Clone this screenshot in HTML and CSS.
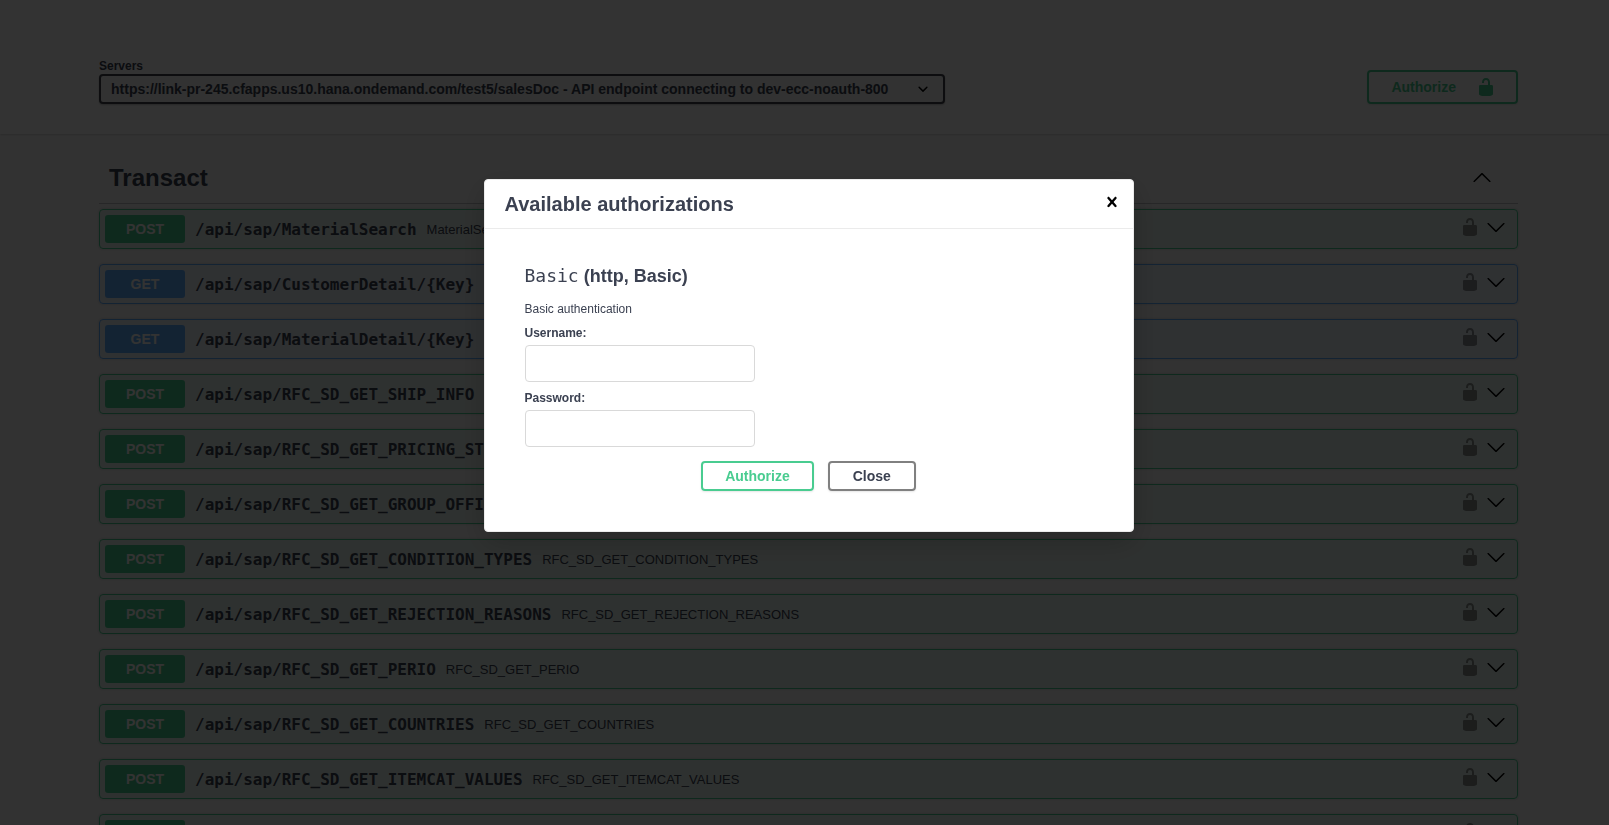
FILE: index.html
```
<!DOCTYPE html>
<html lang="en">
<head>
<meta charset="utf-8">
<title>API documentation</title>
<link rel="stylesheet" href="styles.css">
</head>
<body>
<svg class="sprite" aria-hidden="true">
  <symbol id="unlocked" viewBox="0 0 20 20"><path d="M15.8 8H14V5.6C14 2.703 12.665 1 10 1 7.334 1 6 2.703 6 5.6V6h2v-.801C8 3.754 8.797 3 10 3c1.203 0 2 .754 2 2.199V8H4c-.553 0-1 .646-1 1.199V17c0 .549.428 1.139.951 1.307l1.197.387C5.672 18.861 6.55 19 7.1 19h5.8c.549 0 1.428-.139 1.951-.307l1.196-.387c.524-.167.953-.757.953-1.306V9.199C17 8.646 16.352 8 15.8 8z"/></symbol>
  <symbol id="down" viewBox="0 0 20 20"><path d="M17.418 6.109c.272-.268.709-.268.979 0s.271.701 0 .969l-7.908 7.83c-.27.268-.707.268-.979 0l-7.908-7.83c-.27-.268-.27-.701 0-.969.271-.268.709-.268.979 0L10 13.25l7.418-7.141z"/></symbol>
  <symbol id="up" viewBox="0 0 20 20"><path d="M17.418 14.908c.272.268.709.268.979 0s.271-.701 0-.969l-7.908-7.83c-.27-.268-.707-.268-.979 0l-7.908 7.83c-.27.268-.27.701 0 .969.271.268.709.268.979 0L10 7.767l7.418 7.141z"/></symbol>
  <symbol id="close" viewBox="0 0 20 20"><path d="M14.348 14.849c-.469.469-1.229.469-1.697 0L10 11.819l-2.651 3.029c-.469.469-1.229.469-1.697 0-.469-.469-.469-1.229 0-1.697l2.758-3.15-2.759-3.152c-.469-.469-.469-1.228 0-1.697.469-.469 1.228-.469 1.697 0L10 8.183l2.651-3.031c.469-.469 1.228-.469 1.697 0 .469.469.469 1.229 0 1.697l-2.758 3.152 2.758 3.15c.469.469.469 1.229 0 1.698z"/></symbol>
</svg>

<header class="scheme">
  <div class="wrapper scheme-row">
    <div class="servers">
      <label class="servers-label" for="server">Servers</label>
      <select class="server-select" id="server">
        <option>https://link-pr-245.cfapps.us10.hana.ondemand.com/test5/salesDoc - API endpoint connecting to dev-ecc-noauth-800</option>
      </select>
    </div>
    <button class="btn btn-authorize btn-top" type="button">Authorize <svg class="icon"><use href="#unlocked"/></svg></button>
  </div>
</header>

<main class="wrapper">
  <div class="tag">
    <h2 class="tag-title">Transact</h2>
    <button class="icon-btn" type="button" aria-label="Collapse section"><svg class="icon"><use href="#up"/></svg></button>
  </div>
  <div class="operations">
    <div class="op post"><span class="method">POST</span><span class="path">/api/sap/MaterialSearch</span><span class="summary">MaterialSearch</span><button class="icon-btn lock" type="button" aria-label="Unlocked"><svg class="icon"><use href="#unlocked"/></svg></button><button class="icon-btn" type="button" aria-label="Expand"><svg class="icon"><use href="#down"/></svg></button></div>
    <div class="op get"><span class="method">GET</span><span class="path">/api/sap/CustomerDetail/{Key}</span><button class="icon-btn lock" type="button" aria-label="Unlocked"><svg class="icon"><use href="#unlocked"/></svg></button><button class="icon-btn" type="button" aria-label="Expand"><svg class="icon"><use href="#down"/></svg></button></div>
    <div class="op get"><span class="method">GET</span><span class="path">/api/sap/MaterialDetail/{Key}</span><button class="icon-btn lock" type="button" aria-label="Unlocked"><svg class="icon"><use href="#unlocked"/></svg></button><button class="icon-btn" type="button" aria-label="Expand"><svg class="icon"><use href="#down"/></svg></button></div>
    <div class="op post"><span class="method">POST</span><span class="path">/api/sap/RFC_SD_GET_SHIP_INFO</span><button class="icon-btn lock" type="button" aria-label="Unlocked"><svg class="icon"><use href="#unlocked"/></svg></button><button class="icon-btn" type="button" aria-label="Expand"><svg class="icon"><use href="#down"/></svg></button></div>
    <div class="op post"><span class="method">POST</span><span class="path">/api/sap/RFC_SD_GET_PRICING_ST</span><button class="icon-btn lock" type="button" aria-label="Unlocked"><svg class="icon"><use href="#unlocked"/></svg></button><button class="icon-btn" type="button" aria-label="Expand"><svg class="icon"><use href="#down"/></svg></button></div>
    <div class="op post"><span class="method">POST</span><span class="path">/api/sap/RFC_SD_GET_GROUP_OFFI</span><button class="icon-btn lock" type="button" aria-label="Unlocked"><svg class="icon"><use href="#unlocked"/></svg></button><button class="icon-btn" type="button" aria-label="Expand"><svg class="icon"><use href="#down"/></svg></button></div>
    <div class="op post"><span class="method">POST</span><span class="path">/api/sap/RFC_SD_GET_CONDITION_TYPES</span><span class="summary">RFC_SD_GET_CONDITION_TYPES</span><button class="icon-btn lock" type="button" aria-label="Unlocked"><svg class="icon"><use href="#unlocked"/></svg></button><button class="icon-btn" type="button" aria-label="Expand"><svg class="icon"><use href="#down"/></svg></button></div>
    <div class="op post"><span class="method">POST</span><span class="path">/api/sap/RFC_SD_GET_REJECTION_REASONS</span><span class="summary">RFC_SD_GET_REJECTION_REASONS</span><button class="icon-btn lock" type="button" aria-label="Unlocked"><svg class="icon"><use href="#unlocked"/></svg></button><button class="icon-btn" type="button" aria-label="Expand"><svg class="icon"><use href="#down"/></svg></button></div>
    <div class="op post"><span class="method">POST</span><span class="path">/api/sap/RFC_SD_GET_PERIO</span><span class="summary">RFC_SD_GET_PERIO</span><button class="icon-btn lock" type="button" aria-label="Unlocked"><svg class="icon"><use href="#unlocked"/></svg></button><button class="icon-btn" type="button" aria-label="Expand"><svg class="icon"><use href="#down"/></svg></button></div>
    <div class="op post"><span class="method">POST</span><span class="path">/api/sap/RFC_SD_GET_COUNTRIES</span><span class="summary">RFC_SD_GET_COUNTRIES</span><button class="icon-btn lock" type="button" aria-label="Unlocked"><svg class="icon"><use href="#unlocked"/></svg></button><button class="icon-btn" type="button" aria-label="Expand"><svg class="icon"><use href="#down"/></svg></button></div>
    <div class="op post"><span class="method">POST</span><span class="path">/api/sap/RFC_SD_GET_ITEMCAT_VALUES</span><span class="summary">RFC_SD_GET_ITEMCAT_VALUES</span><button class="icon-btn lock" type="button" aria-label="Unlocked"><svg class="icon"><use href="#unlocked"/></svg></button><button class="icon-btn" type="button" aria-label="Expand"><svg class="icon"><use href="#down"/></svg></button></div>
    <div class="op post"><span class="method"></span><button class="icon-btn lock" type="button" aria-label="Unlocked"><svg class="icon"><use href="#unlocked"/></svg></button><button class="icon-btn" type="button" aria-label="Expand"><svg class="icon"><use href="#down"/></svg></button></div>
  </div>
</main>

<div class="backdrop">
  <section class="modal" role="dialog" aria-modal="true" aria-labelledby="modal-title">
    <div class="modal-header">
      <h3 class="modal-title" id="modal-title">Available authorizations</h3>
      <button class="icon-btn" type="button" aria-label="Close dialog"><svg class="icon"><use href="#close"/></svg></button>
    </div>
    <form class="modal-body">
      <h4 class="auth-title"><code class="auth-name">Basic</code> (http, Basic)</h4>
      <p class="auth-text">Basic authentication</p>
      <label class="field-label" for="username">Username:</label>
      <input class="field" id="username" type="text">
      <label class="field-label" for="password">Password:</label>
      <input class="field" id="password" type="password">
      <div class="actions">
        <button class="btn btn-authorize" type="button">Authorize</button>
        <button class="btn" type="button">Close</button>
      </div>
    </form>
  </section>
</div>
</body>
</html>
```

FILE: styles.css
```
* {
  box-sizing: border-box;
}

body {
  margin: 0;
  height: 100vh;
  overflow: hidden;
  background: #fafafa;
  color: #3b4151;
  font-family: "Liberation Sans", Arial, sans-serif;
}

h2, h3, h4, p {
  margin: 0;
}

.sprite {
  display: none;
}

.icon {
  display: block;
  width: 20px;
  height: 20px;
  flex: none;
}

.icon-btn {
  display: block;
  padding: 0;
  border: 0;
  background: none;
  color: #000;
  cursor: pointer;
}

.wrapper {
  padding: 0 91px 0 99px;
}

/* Server bar */
.scheme {
  padding: 58px 0 30px;
  background: #fff;
  box-shadow: 0 1px 2px rgba(0, 0, 0, .15);
}

.scheme-row {
  display: flex;
  justify-content: space-between;
  align-items: flex-end;
}

.servers {
  display: flex;
  flex-direction: column;
  align-items: flex-start;
}

.servers-label {
  font-size: 12px;
  line-height: 16px;
  font-weight: 700;
}

.server-select {
  appearance: none;
  height: 30px;
  padding: 0 54px 0 10px;
  border: 2px solid #41444e;
  border-radius: 4px;
  background: #f7f7f7 url("data:image/svg+xml,%3Csvg xmlns='http://www.w3.org/2000/svg' viewBox='0 0 20 20'%3E%3Cpath d='M13.418 7.859a.695.695 0 01.978 0 .68.68 0 010 .969l-3.908 3.83a.697.697 0 01-.979 0l-3.908-3.83a.68.68 0 010-.969.695.695 0 01.978 0L10 11l3.418-3.141z'/%3E%3C/svg%3E") right 10px center / 20px no-repeat;
  box-shadow: 0 1px 2px rgba(0, 0, 0, .25);
  color: #3b4151;
  font: 700 14px "Liberation Sans", Arial, sans-serif;
}

/* Buttons */
.btn {
  display: flex;
  align-items: center;
  height: 30px;
  padding: 0 23px;
  border: 2px solid #808080;
  border-radius: 4px;
  background: transparent;
  box-shadow: 0 1px 2px rgba(0, 0, 0, .1);
  color: #3b4151;
  font: 700 14px "Liberation Sans", Arial, sans-serif;
  cursor: pointer;
}

.btn-authorize {
  padding: 0 22px;
  border-color: #49cc90;
  color: #49cc90;
}

.btn-top {
  gap: 20px;
  height: 34px;
  padding-right: 20px;
}

.btn .icon,
.icon-btn .icon {
  fill: currentColor;
}

/* Tag section */
.tag {
  display: flex;
  justify-content: space-between;
  align-items: center;
  margin-top: 21px;
  padding: 8px 26px 10px 10px;
  border-bottom: 1px solid rgba(59, 65, 81, .3);
}

.tag-title {
  font-size: 24px;
  line-height: 30px;
}

.tag .icon-btn {
  margin-bottom: 2px;
}

.operations {
  display: flex;
  flex-direction: column;
  gap: 15px;
  padding-top: 5px;
}

.op {
  display: flex;
  align-items: center;
  height: 40px;
  padding: 0 11px 0 5px;
  border: 1px solid;
  border-radius: 4px;
  box-shadow: 0 0 3px rgba(0, 0, 0, .19);
}

.op.post {
  border-color: #49cc90;
  background: rgba(73, 204, 144, .1);
}

.op.get {
  border-color: #61affe;
  background: rgba(97, 175, 254, .1);
}

.method {
  width: 80px;
  height: 28px;
  border-radius: 3px;
  color: #fff;
  font-size: 14px;
  line-height: 28px;
  font-weight: 700;
  text-align: center;
}

.post .method {
  background: #49cc90;
}

.get .method {
  background: #61affe;
}

.path {
  padding: 0 10px;
  font: 700 16px "DejaVu Sans Mono", monospace;
}

.summary {
  font-size: 13px;
}

.op .icon-btn {
  margin-bottom: 4px;
}

.op .lock {
  margin-left: auto;
  margin-right: 6px;
  opacity: .4;
}

/* Dialog */
.backdrop {
  position: fixed;
  inset: 0;
  display: flex;
  justify-content: center;
  align-items: flex-start;
  padding: 179px 0 0 8px;
  background: rgba(0, 0, 0, .8);
}

.modal {
  width: 650px;
  max-width: 90%;
  border: 1px solid #ebebeb;
  border-radius: 4px;
  background: #fff;
  box-shadow: 0 10px 30px rgba(0, 0, 0, .2);
}

.modal-header {
  display: flex;
  justify-content: space-between;
  align-items: center;
  padding: 12px 11px 12px 20px;
  border-bottom: 1px solid #ebebeb;
}

.modal-title {
  font-size: 20px;
  line-height: 24px;
}

.modal-header .icon-btn {
  margin-bottom: 4px;
}

.modal-body {
  padding: 35px 40px 40px;
}

.auth-title {
  font-size: 18px;
  line-height: 24px;
}

.auth-name {
  font: 400 18px "DejaVu Sans Mono", monospace;
}

.auth-text {
  margin-top: 13px;
  font-size: 12px;
  line-height: 16px;
}

.field-label {
  display: block;
  margin-top: 8px;
  font-size: 12px;
  line-height: 16px;
  font-weight: 700;
}

.field {
  display: block;
  width: 230px;
  height: 37px;
  margin-top: 4px;
  padding: 8px 10px;
  border: 1px solid #d9d9d9;
  border-radius: 4px;
  background: #fff;
}

.actions {
  display: flex;
  justify-content: center;
  gap: 14px;
  margin-top: 14px;
}
```
